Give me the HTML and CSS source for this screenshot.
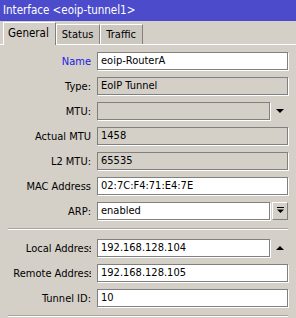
FILE: index.html
```html
<!DOCTYPE html>
<html lang="en">
<head>
<meta charset="UTF-8">
<meta name="viewport" content="width=device-width, initial-scale=1.0">
<title>Interface &lt;eoip-tunnel1&gt;</title>
<link rel="stylesheet" href="styles.css">
</head>
<body>
<div class="titleBar">Interface &lt;eoip-tunnel1&gt;</div>

<div class="tabs">
    <div class="tab active">General</div>
    <div class="tab">Status</div>
    <div class="tab">Traffic</div>
</div>

<div class="panel">
    <div class="row">
        <div class="label named">Name</div>
        <div class="field edit">eoip-RouterA</div>
    </div>
    <div class="row">
        <div class="label">Type:</div>
        <div class="field">EoIP Tunnel</div>
    </div>
    <div class="row">
        <div class="label">MTU:</div>
        <div class="field short"></div>
        <div class="extra"><span class="arrowDown"></span></div>
    </div>
    <div class="row">
        <div class="label">Actual MTU</div>
        <div class="field">1458</div>
    </div>
    <div class="row">
        <div class="label">L2 MTU:</div>
        <div class="field">65535</div>
    </div>
    <div class="row">
        <div class="label">MAC Address</div>
        <div class="field edit">02:7C:F4:71:E4:7E</div>
    </div>
    <div class="row">
        <div class="label">ARP:</div>
        <div class="field edit short">enabled</div>
        <div class="extra">
            <div class="dropButton">
                <svg width="8" height="8" viewBox="0 0 8 8"><rect x="0" y="0" width="7" height="1" fill="#000"/><path d="M0 2.5h7L3.5 6z" fill="#000"/></svg>
            </div>
        </div>
    </div>

    <div class="sep first"></div>

    <div class="row">
        <div class="label clip"><span>Local Address</span></div>
        <div class="field edit short">192.168.128.104</div>
        <div class="extra"><span class="arrowUp"></span></div>
    </div>
    <div class="row">
        <div class="label clip"><span>Remote Address</span></div>
        <div class="field edit">192.168.128.105</div>
    </div>
    <div class="row">
        <div class="label">Tunnel ID:</div>
        <div class="field edit">10</div>
    </div>

    <div class="sep last"></div>
</div>
</body>
</html>
```

FILE: styles.css
```css
/* WinBox style interface window */
body {
    margin: 0;
    background-color: #d4d0c8;
    font-family: "DejaVu Sans Condensed", "DejaVu Sans", sans-serif;
    font-stretch: condensed;
    font-size: 11px;
    color: #000;
    width: 296px;
    height: 318px;
    overflow: hidden;
}

.titleBar {
    height: 21px;
    line-height: 21px;
    padding-left: 3px;
    background-color: #4b4bcb;
    color: #fff;
    font-size: 11.5px;
}

.tabs {
    display: flex;
    align-items: flex-end;
    height: 22px;
    margin-top: 1px;
    padding-left: 3px;
    border-bottom: 1px solid #fff;
}

.tab {
    height: 19px;
    line-height: 19px;
    padding: 0 6px 0 5px;
    background-color: #ccc8c0;
    border-top: 1px solid #fff;
    border-left: 1px solid #fff;
    border-right: 1px solid #808080;
}

.tab.active {
    height: 22px;
    line-height: 21px;
    margin-bottom: -1px;
    padding: 0 6px 0 4px;
    background-color: #d4d0c8;
    font-size: 11.5px;
}

.panel {
    display: flex;
    flex-direction: column;
    gap: 7px;
    padding: 7px 8px 0 8px;
}

.row {
    display: flex;
    align-items: center;
    height: 18px;
}

.label {
    width: 83px;
    margin-right: 6px;
    text-align: right;
    white-space: nowrap;
    overflow: hidden;
}

.label.named {
    color: #1a1ae6;
}

.label.clip span {
    display: inline-block;
    margin-right: -3px;
}

.field {
    box-sizing: border-box;
    width: 191px;
    height: 18px;
    line-height: 16px;
    padding-left: 3px;
    border: 1px solid #808080;
    box-shadow: 1px 1px 0 #fff;
    white-space: nowrap;
    overflow: hidden;
}

.field.edit {
    background-color: #fff;
}

.field.short {
    width: 173px;
}

.extra {
    flex: 1;
    display: flex;
    align-items: center;
    justify-content: flex-end;
    height: 18px;
}

.arrowDown {
    width: 0;
    height: 0;
    margin-right: 4px;
    border-left: 4px solid transparent;
    border-right: 4px solid transparent;
    border-top: 4px solid #000;
}

.arrowUp {
    width: 0;
    height: 0;
    margin-right: 4px;
    border-left: 4px solid transparent;
    border-right: 4px solid transparent;
    border-bottom: 4px solid #000;
}

.dropButton {
    box-sizing: border-box;
    width: 16px;
    height: 18px;
    display: flex;
    align-items: center;
    justify-content: center;
    border-top: 1px solid #fff;
    border-left: 1px solid #fff;
    border-right: 1px solid #808080;
    border-bottom: 1px solid #808080;
}

.dropButton svg {
    margin-left: 1px;
}

.sep {
    height: 0;
    border-top: 1px solid #a8a49c;
    border-bottom: 1px solid #fff;
}

.sep.first {
    margin: 1px 0 2px 0;
}

.sep.last {
    margin-top: 1px;
}
```
